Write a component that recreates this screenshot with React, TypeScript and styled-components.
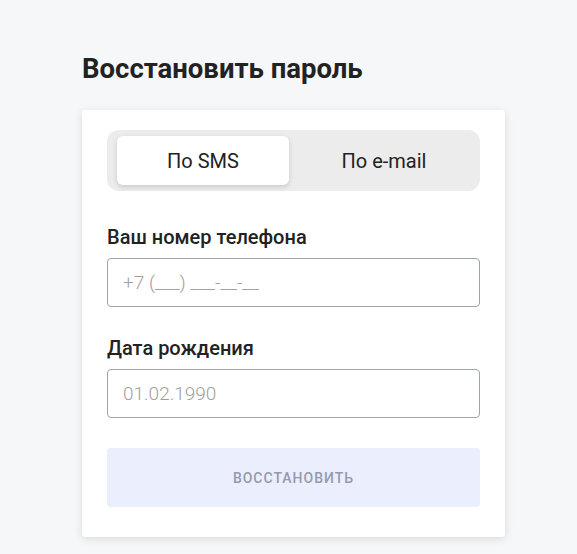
import styled, { createGlobalStyle } from "styled-components";
import { useState } from "react";

const GlobalStyle = createGlobalStyle`
  body {
    margin: 0;
    background: #f5f7f9;
    font-family: Roboto, "Liberation Sans", sans-serif;
    color: #222;
  }
`;

const Page = styled.div`
  width: 577px;
  height: 554px;
  padding: 52px 0 0 82px;
  box-sizing: border-box;
  overflow: hidden;
`;

const Title = styled.h1`
  margin: 0 0 24px;
  font-size: 27.5px;
  line-height: 34px;
  font-weight: 700;
  color: #222;
`;

const Card = styled.div`
  width: 423px;
  box-sizing: border-box;
  background: #fff;
  padding: 20px 25px 30px;
  border-radius: 3px;
  box-shadow: 0 2px 8px rgba(0, 0, 0, 0.12);
`;

const Tabs = styled.div`
  display: flex;
  gap: 9px;
  height: 61px;
  box-sizing: border-box;
  padding: 6px 10px;
  background: #ececec;
  border-radius: 12px;
`;

const Tab = styled.button<{ active?: boolean }>`
  flex: 1;
  border: none;
  outline: none;
  border-radius: 6px;
  background: ${(p) => (p.active ? "#fff" : "transparent")};
  box-shadow: ${(p) => (p.active ? "0 2px 5px rgba(0,0,0,0.15)" : "none")};
  font-family: inherit;
  font-size: 20px;
  color: #222;
  cursor: pointer;
`;

const Field = styled.div`
  display: flex;
  flex-direction: column;
  gap: 9px;
  margin-top: ${(p: { mt: number }) => p.mt}px;
`;

const Label = styled.label`
  font-size: 20px;
  line-height: 24px;
  font-weight: 500;
  color: #222;
`;

const Input = styled.input`
  height: 49px;
  box-sizing: border-box;
  border: 1px solid #9aa6af;
  border-radius: 4px;
  padding: 0 15px;
  font-family: inherit;
  font-size: 19px;
  font-weight: 300;
  outline: none;
  &::placeholder {
    color: #a0a0a0;
  }
`;

const Submit = styled.button`
  margin-top: 30px;
  width: 100%;
  height: 59px;
  border: none;
  border-radius: 4px;
  background: #ebeefd;
  color: #9699ad;
  font-family: inherit;
  font-size: 14px;
  font-weight: 500;
  letter-spacing: 1px;
`;

const App = () => {
  const [tab, setTab] = useState("sms");

  return (
    <Page>
      <GlobalStyle />
      <Title>Восстановить пароль</Title>
      <Card>
        <Tabs>
          <Tab active={tab === "sms"} onClick={() => setTab("sms")}>
            По SMS
          </Tab>
          <Tab active={tab === "email"} onClick={() => setTab("email")}>
            По e-mail
          </Tab>
        </Tabs>
        <Field mt={34}>
          <Label>Ваш номер телефона</Label>
          <Input placeholder="+7 (___) ___-__-__" />
        </Field>
        <Field mt={29}>
          <Label>Дата рождения</Label>
          <Input placeholder="01.02.1990" />
        </Field>
        <Submit disabled>ВОССТАНОВИТЬ</Submit>
      </Card>
    </Page>
  );
};

export default App;
